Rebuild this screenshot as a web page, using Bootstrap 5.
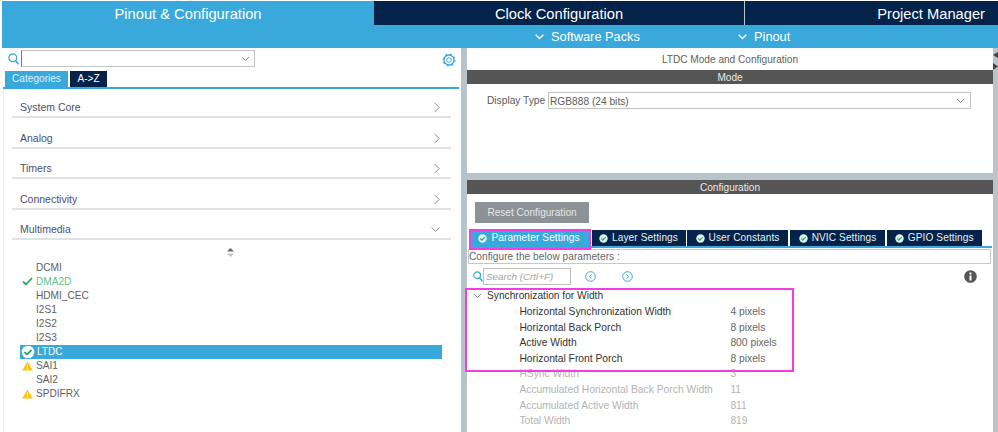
<!DOCTYPE html>
<html lang="en"><head><meta charset="utf-8"><title>LTDC</title>
<link href="https://cdn.jsdelivr.net/npm/bootstrap@5.3.0/dist/css/bootstrap.min.css" rel="stylesheet">
<style>
html,body{height:432px;overflow:hidden;background:#fff;font-family:"Liberation Sans",Arial,sans-serif;font-size:10.1px;color:#5a5a5a}
.shell{width:998px;height:432px;padding:1px 0 0 2px}
.tabbar{height:24px;background:#03234b;color:#fff;font-size:14.7px}
.tt{height:24px;line-height:27px;text-align:center}
.t1{width:372px;background:#39a9dc;flex:none}
.t2{width:371px;border-right:1px solid #b9c4ca;flex:none}
.t3{flex:1;padding-right:13px}
.subbar{height:23px;background:#39a9dc;color:#fff;font-size:12.8px;padding:1px 0 0 533px}
.subbar>span{display:flex;align-items:center;gap:7px}
.subbar>span:first-child{width:203px}
.main{height:384px}
.leftp{width:459px;flex:none}
.sep{width:6px;background:#b9c4ca;flex:none}
.rightp{width:526px;flex:none}
.strip{width:5px;background:#b9c4ca;flex:none;padding-top:4px;overflow:hidden}
.searchrow{height:23px;padding:2px 5px 0 6px}
.searchrow>svg{margin-top:3px}
.combo{width:234px;height:17px;margin-left:2px;border:1px solid #c3c3c3;border-left:1px solid #777;padding-right:4px}
.tabs2{padding-left:3px;height:16px}
.c1{width:63px;height:16px;background:#39a9dc;color:#dff1fa;line-height:15px;text-align:center}
.c2{width:37px;height:16px;margin-left:2px;background:#03234b;color:#fff;line-height:15px;text-align:center}
.rule2{height:2px;background:#39a9dc;margin:0 2px 0 1px}
.lwrap{margin-left:1px;border-left:1px solid #eef1f2;height:344px}
.catlist{margin:0 10px 0 8px}
.cat{height:30.5px;border-bottom:2px solid #dde3e6;color:#4c4f70;font-size:10.5px;line-height:15px;padding:12px 11px 0 8px}
.cat:first-child{height:29px;padding-top:10.5px}
.updn{height:15px;padding:8px 5px 0 0}
.ips{margin:5.5px 0 0;padding:0 0 0 16px;list-style:none}
.ips li{height:14.1px;line-height:14px;display:flex;width:422px;color:#62605f}
.ic{width:16px;flex:none;display:flex;align-items:center;padding-left:2px}
.ips li.on{background:#39a9dc;color:#fff}
.ips li.on .ic{width:17px;padding-left:1px}
.ips li.gr{color:#5fc187}
.rtitle{height:22px;line-height:24px;text-align:center;color:#5f5f5f}
.bar{height:14px;line-height:15px;background:#545554;color:#e9e9e9;text-align:center}
.modeb{height:89px;padding:8px 0 0 20px;color:#5c5c5c;font-size:10.2px}
.lbl{width:61px;flex:none;padding-top:1px}
.sel{width:423px;height:17px;border:1px solid #c3c3c3;padding:1px 5px 0 1px;line-height:15px;color:#5c5c5c}
.gapb{height:7px;background:#b9c4ca}
.resetb{width:114px;height:21px;margin:8px 0 0 8px;background:#8d9296;color:#e6e6e6;line-height:22px;text-align:center}
.ptabs{margin:7px 0 0 2px;height:16px}
.pt{height:16px;background:#03234b;color:#e8eef3;display:flex;align-items:center;justify-content:center;gap:4px;letter-spacing:.1px}
.pt.act{background:#39a9dc;color:#fff}
.ptw{position:relative;width:120px;margin-right:2.5px}
.w2{width:94px;margin-right:1.5px}
.w3{width:101px;margin-right:2px}
.w4{width:95px;margin-right:1.5px}
.w5{width:95.5px}
.rule3{height:1.5px;background:#39a9dc;margin-left:2px;width:523px}
.cfg{height:15px;border:1px solid #c8c8c8;margin:1.5px 0 0 1px;line-height:14px;color:#666;letter-spacing:.05px;width:523px}
.srch{height:24px;padding:1px 0 0 6px}
.sbox{width:88px;height:17px;border:1px solid #bdbdbd;color:#a4a4a4;font-style:italic;font-size:9.8px;line-height:15px;padding-left:2px}
.nv1{margin-left:14px}
.nv2{margin-left:26px}
.nv3{margin-left:331px}
.tree{position:relative}
.th{height:16px;color:#333;font-size:10.2px;display:flex;align-items:center}
.th svg{margin:0 5px 0 6px}
.pr{height:15.6px;display:flex;line-height:15px;color:#333;font-size:10.3px;padding-left:52.4px}
.pr span:first-child{width:211px;flex:none}
.pr span:last-child{color:#666}
.pr.dim,.pr.dim span:last-child{color:#b3b3b3}
.hl{position:absolute;border:2px solid #f23ee0;pointer-events:none}
.hl1{left:-2px;top:0;width:329px;height:84px}
.hl2{left:0;top:-1px;width:122px;height:21px}
</style></head><body>
<div class="shell">
<div class="tabbar d-flex">
<div class="tt t1">Pinout &amp; Configuration</div>
<div class="tt t2">Clock Configuration</div>
<div class="tt t3 text-end">Project Manager</div>
</div>
<div class="subbar d-flex">
<span><svg width="9" height="6" viewBox="0 0 9 6"><path d="M.7.7L4.500 4.500 8.300.7" fill="none" stroke="#fff" stroke-width="1.400"/></svg>Software Packs</span>
<span><svg width="9" height="6" viewBox="0 0 9 6"><path d="M.7.7L4.500 4.500 8.300.7" fill="none" stroke="#fff" stroke-width="1.400"/></svg>Pinout</span>
</div>
<div class="main d-flex">
<div class="leftp">
<div class="searchrow d-flex align-items-start">
<svg width="11" height="12" viewBox="0 0 11 12"><circle cx="4.800" cy="4.800" r="3.900" fill="none" stroke="#39a9dc" stroke-width="1.300"/><path d="M7.500 7.800l3 3.500" stroke="#39a9dc" stroke-width="1.600"/></svg>
<div class="combo d-flex align-items-center justify-content-end"><svg width="9" height="6" viewBox="0 0 9 6"><path d="M1 1l3.500 3.500L8 1" fill="none" stroke="#888"/></svg></div>
<svg class="ms-auto" width="14" height="14" viewBox="0 0 14 14"><circle cx="7" cy="7" r="2.300" fill="none" stroke="#39a9dc"/><circle cx="7" cy="7" r="5" fill="none" stroke="#39a9dc" stroke-width="1.300"/><circle cx="7" cy="7" r="5.800" fill="none" stroke="#39a9dc" stroke-width="1.300" stroke-dasharray="2 2.550"/></svg>
</div>
<div class="tabs2 d-flex"><div class="c1">Categories</div><div class="c2">A-&gt;Z</div></div>
<div class="rule2"></div>
<div class="lwrap">
<div class="catlist">
<div class="cat d-flex justify-content-between align-items-center"><span>System Core</span><svg width="6" height="11" viewBox="0 0 6 11"><path d="M.7 1l4.500 4.500L.7 10" fill="none" stroke="#888"/></svg></div>
<div class="cat d-flex justify-content-between align-items-center"><span>Analog</span><svg width="6" height="11" viewBox="0 0 6 11"><path d="M.7 1l4.500 4.500L.7 10" fill="none" stroke="#888"/></svg></div>
<div class="cat d-flex justify-content-between align-items-center"><span>Timers</span><svg width="6" height="11" viewBox="0 0 6 11"><path d="M.7 1l4.500 4.500L.7 10" fill="none" stroke="#888"/></svg></div>
<div class="cat d-flex justify-content-between align-items-center"><span>Connectivity</span><svg width="6" height="11" viewBox="0 0 6 11"><path d="M.7 1l4.500 4.500L.7 10" fill="none" stroke="#888"/></svg></div>
<div class="cat d-flex justify-content-between align-items-center"><span>Multimedia</span><svg width="9" height="6" viewBox="0 0 9 6"><path d="M.5.5l4 4 4-4" fill="none" stroke="#888"/></svg></div>
</div>
<div class="updn"><svg width="7" height="9" viewBox="0 0 7 9" class="d-block mx-auto"><path d="M3.500 0L7 3.500H0z" fill="#666"/><path d="M3.500 9L7 5.500H0z" fill="#c4c4c4"/></svg></div>
<ul class="ips">
<li><span class="ic"></span>DCMI</li>
<li class="gr"><span class="ic"><svg width="11" height="9" viewBox="0 0 11 9"><path d="M1 4.500l3 3L10 1" fill="none" stroke="#2ea66b" stroke-width="1.800"/></svg></span>DMA2D</li>
<li><span class="ic"></span>HDMI_CEC</li>
<li><span class="ic"></span>I2S1</li>
<li><span class="ic"></span>I2S2</li>
<li><span class="ic"></span>I2S3</li>
<li class="on"><span class="ic"><svg width="14" height="14" viewBox="0 0 14 14"><circle cx="7" cy="7" r="6.300" fill="#fff"/><path d="M3.500 7l2.500 2.500L10.500 5" fill="none" stroke="#2ea66b" stroke-width="1.800"/></svg></span>LTDC</li>
<li><span class="ic"><svg width="11" height="10" viewBox="0 0 11 10"><path d="M5.500 0.500L10.800 9.500H.2z" fill="#fcc40f"/><path d="M5.500 3.500v3M5.500 7.500v1" stroke="#fff"/></svg></span>SAI1</li>
<li><span class="ic"></span>SAI2</li>
<li><span class="ic"><svg width="11" height="10" viewBox="0 0 11 10"><path d="M5.500 0.500L10.800 9.500H.2z" fill="#fcc40f"/><path d="M5.500 3.500v3M5.500 7.500v1" stroke="#fff"/></svg></span>SPDIFRX</li>
</ul>
</div>
</div>
<div class="sep"></div>
<div class="rightp">
<div class="rtitle">LTDC Mode and Configuration</div>
<div class="bar">Mode</div>
<div class="modeb"><div class="d-flex align-items-center"><span class="lbl">Display Type</span><div class="sel d-flex justify-content-between align-items-center"><span>RGB888 (24 bits)</span><svg width="9" height="6" viewBox="0 0 9 6"><path d="M1 1l3.500 3.500L8 1" fill="none" stroke="#888"/></svg></div></div></div>
<div class="gapb"></div>
<div class="bar">Configuration</div>
<div class="resetb">Reset Configuration</div>
<div class="ptabs d-flex">
<div class="ptw"><div class="pt act">
<svg width="9" height="9" viewBox="0 0 9 9"><circle cx="4.500" cy="4.500" r="4.200" fill="#dff3ea"/><path d="M2.300 4.500l1.600 1.600 2.800-2.900" fill="none" stroke="#2ea66b" stroke-width="1.200"/></svg>Parameter Settings</div><div class="hl hl2"></div></div>
<div class="pt w2"><svg width="9" height="9" viewBox="0 0 9 9"><circle cx="4.500" cy="4.500" r="4.200" fill="#dff3ea"/><path d="M2.300 4.500l1.600 1.600 2.800-2.900" fill="none" stroke="#2ea66b" stroke-width="1.200"/></svg>Layer Settings</div>
<div class="pt w3"><svg width="9" height="9" viewBox="0 0 9 9"><circle cx="4.500" cy="4.500" r="4.200" fill="#dff3ea"/><path d="M2.300 4.500l1.600 1.600 2.800-2.900" fill="none" stroke="#2ea66b" stroke-width="1.200"/></svg>User Constants</div>
<div class="pt w4"><svg width="9" height="9" viewBox="0 0 9 9"><circle cx="4.500" cy="4.500" r="4.200" fill="#dff3ea"/><path d="M2.300 4.500l1.600 1.600 2.800-2.900" fill="none" stroke="#2ea66b" stroke-width="1.200"/></svg>NVIC Settings</div>
<div class="pt w5"><svg width="9" height="9" viewBox="0 0 9 9"><circle cx="4.500" cy="4.500" r="4.200" fill="#dff3ea"/><path d="M2.300 4.500l1.600 1.600 2.800-2.900" fill="none" stroke="#2ea66b" stroke-width="1.200"/></svg>GPIO Settings</div>
</div>
<div class="rule3"></div>
<div class="cfg">Configure the below parameters :</div>
<div class="srch d-flex align-items-center">
<svg width="10" height="11" viewBox="0 0 10 11"><circle cx="4.200" cy="4.200" r="3.300" fill="none" stroke="#39a9dc" stroke-width="1.300"/><path d="M6.500 6.800l3 3.500" stroke="#39a9dc" stroke-width="1.500"/></svg>
<div class="sbox">Search (Crtl+F)</div>
<svg class="nv1" width="11" height="11" viewBox="0 0 11 11"><circle cx="5.500" cy="5.500" r="4.800" fill="none" stroke="#39a9dc"/><path d="M6.500 3.500l-2 2 2 2" fill="none" stroke="#39a9dc"/></svg>
<svg class="nv2" width="11" height="11" viewBox="0 0 11 11"><circle cx="5.500" cy="5.500" r="4.800" fill="none" stroke="#39a9dc"/><path d="M4.500 3.500l2 2-2 2" fill="none" stroke="#39a9dc"/></svg>
<svg class="nv3" width="13" height="13" viewBox="0 0 13 13"><circle cx="6.500" cy="6.500" r="6.300" fill="#555"/><rect x="5.500" y="5.500" width="2" height="5" fill="#fff"/><rect x="5.500" y="2.500" width="2" height="2" fill="#fff"/></svg>
</div>
<div class="tree">
<div class="hl hl1"></div>
<div class="th"><svg width="9" height="6" viewBox="0 0 9 6"><path d="M1 1l3.500 3.500L8 1" fill="none" stroke="#888"/></svg>Synchronization for Width</div>
<div class="pr"><span>Horizontal Synchronization Width</span><span>4 pixels</span></div>
<div class="pr"><span>Horizontal Back Porch</span><span>8 pixels</span></div>
<div class="pr"><span>Active Width</span><span>800 pixels</span></div>
<div class="pr"><span>Horizontal Front Porch</span><span>8 pixels</span></div>
<div class="pr dim"><span>HSync Width</span><span>3</span></div>
<div class="pr dim"><span>Accumulated Horizontal Back Porch Width</span><span>11</span></div>
<div class="pr dim"><span>Accumulated Active Width</span><span>811</span></div>
<div class="pr dim"><span>Total Width</span><span>819</span></div>
</div>
</div>
<div class="strip"><svg class="d-block" width="5" height="20" viewBox="0 0 5 20"><path d="M5 0v6L0 3z" fill="#444"/><path d="M0 11v7l5-3.500z" fill="#444"/></svg></div>
</div>
</div>
<script src="https://cdn.jsdelivr.net/npm/bootstrap@5.3.0/dist/js/bootstrap.bundle.min.js"></script>
</body></html>
